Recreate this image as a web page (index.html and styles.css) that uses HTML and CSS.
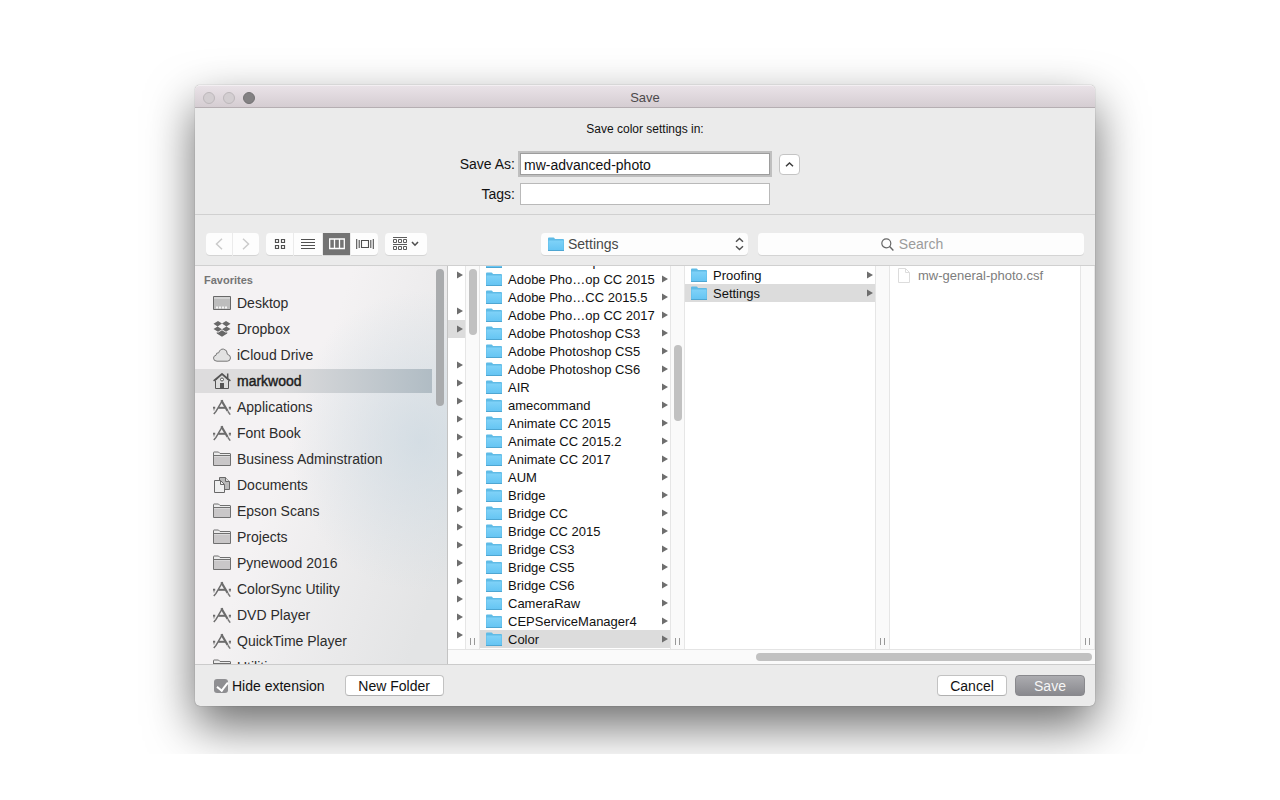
FILE: index.html
```html
<!DOCTYPE html>
<html lang="en">
<head>
  <meta charset="UTF-8" />
  <meta name="viewport" content="width=device-width, initial-scale=1.0"/>
  <title>Save</title>
  <link rel="stylesheet" href="styles.css">
</head>
<body>

  <!-- Icon sprite -->
  <svg class="sprite" aria-hidden="true">
    <linearGradient id="folder-fill" x1="0" y1="0" x2="0" y2="1">
      <stop offset="0" stop-color="#7fd2f8"/>
      <stop offset="1" stop-color="#66c5f3"/>
    </linearGradient>
    <symbol id="folder" viewBox="0 0 16 14">
      <path d="M0 14V1.5Q0 .5 1 .5H5.5Q6.2 .5 6.5 1.2L7 2H15Q16 2 16 3V14Z" fill="#5fbbe6"/>
      <path d="M.5 3.5H15.5V13H.5Z" fill="url(#folder-fill)"/>
      <path d="M0 13.5H16" stroke="#4ea6d2"/>
    </symbol>
    <symbol id="file" viewBox="0 0 16 16">
      <path d="M2.5 1.5H9.5L13.5 5.5V15.5H2.5ZM9.5 1.5V5.5H13.5" fill="#fff" stroke="#dcdcdc"/>
    </symbol>
    <symbol id="arrow" viewBox="0 0 6 8">
      <path d="M0 .5L6 4L0 7.5Z" fill="#6e6e6e"/>
    </symbol>
    <symbol id="desktop" viewBox="0 0 18 16">
      <path d="M.5 1.5H17.5V14.5H.5Z" fill="#bdbdbd" stroke="#686868"/>
      <path d="M1 3H17" stroke="#e9e9e9"/>
      <path d="M3 12.5H15" stroke="#f4f4f4" stroke-width="2" stroke-dasharray="2 1"/>
    </symbol>
    <symbol id="dropbox" viewBox="0 0 18 16">
      <path d="M5 0L9 2.6L4.6 5.4L.5 2.7ZM13 0L17.5 2.7L13.4 5.4L9 2.6ZM.5 8.1L4.6 5.4L9 8.2L5 10.8ZM13.4 5.4L17.5 8.1L13 10.8L9 8.2ZM9 9.2L13 11.8L14.2 11.1V12.5L9 15.8L3.8 12.5V11.1L5 11.8Z" fill="#686868"/>
    </symbol>
    <symbol id="cloud" viewBox="0 0 18 16">
      <path d="M4 14.2Q.5 14.1 .5 11.1Q.6 8.6 3 8.3Q3 5.4 5.7 5.8Q7 1.7 10.5 2.1Q14.4 2.7 14.4 7.3Q17.5 8 17.5 10.9Q17.3 14.2 14.3 14.2Z" fill="#e2e2e2" stroke="#777"/>
    </symbol>
    <symbol id="home" viewBox="0 0 18 16">
      <path d="M2.5 7.5V15.5H15.5V7.5L9 1.5Z" fill="#ddd" stroke="#555"/>
      <path d="M.6 7.8L9 .8L17.4 7.8M14.7 5V.5" fill="none" stroke="#555" stroke-width="1.5"/>
      <path d="M7 10H11V15H7Z" fill="#555"/>
      <circle cx="9" cy="6.5" r="1.5" fill="#fff" stroke="#555"/>
    </symbol>
    <symbol id="apps" viewBox="0 0 18 16">
      <path d="M9.6 1.2L3 12.4L.8 15" fill="none" stroke="#6c6c6c" stroke-width="1.5"/>
      <path d="M8.3 1.2L14.6 12" stroke="#6c6c6c" stroke-width="2.2"/>
      <path d="M14.8 12.2L17.2 15.6" stroke="#777" stroke-width="1.5"/>
      <path d="M5.2 8.8H12.2" stroke="#6c6c6c" stroke-width="2"/>
      <path d="M0 8.8H2.2M15.8 8.8H18" stroke="#6c6c6c" stroke-width="2"/>
      <path d="M1 11.5V9.5M17 11V9.5" stroke="#888"/>
    </symbol>
    <symbol id="side-folder" viewBox="0 0 18 16">
      <path d="M.5 14.5V1.5Q.5 1 1 1H5.5L7 2.5H17Q17.5 2.5 17.5 3V14.5Z" fill="#ececec" stroke="#707070"/>
      <path d="M1 5.5H17V14H1Z" fill="#c9c7c8"/>
      <path d="M1 4.5H17" stroke="#707070"/>
    </symbol>
    <symbol id="documents" viewBox="0 0 18 16">
      <path d="M6.5 .5H12.5L16.5 4.5V12.5H6.5Z" fill="#b9b9b9" stroke="#686868"/>
      <path d="M12.5 .5V4.5H16.5" fill="#ddd" stroke="#686868"/>
      <path d="M1.5 3.5H7.5L11.5 7.5V15.5H1.5Z" fill="#efefef" stroke="#686868"/>
      <path d="M7.5 3.5V7.5H11.5" fill="none" stroke="#686868"/>
    </symbol>
  </svg>

  <main class="stage">
    <section class="window">

      <header class="titlebar">
        <div class="lights">
          <button class="light" aria-label="Close"></button>
          <button class="light" aria-label="Minimize"></button>
          <button class="light light-on" aria-label="Zoom"></button>
        </div>
        <h1>Save</h1>
      </header>

      <!-- File name and tags -->
      <form class="details">
        <p>Save color settings in:</p>
        <label for="save-as">Save As:</label>
        <input type="text" id="save-as" class="focused" value="mw-advanced-photo" />
        <button type="button" class="collapse" aria-label="Collapse">
          <svg width="9" height="5" viewBox="0 0 9 5"><path d="M1 4.2L4.5 1L8 4.2" fill="none" stroke="#3c3c3c" stroke-width="1.5"/></svg>
        </button>
        <label for="tags">Tags:</label>
        <input type="text" id="tags" />
      </form>

      <!-- Toolbar -->
      <div class="toolbar">
        <div class="tools">
          <div class="group">
            <button class="nav" aria-label="Back"><svg width="8" height="12" viewBox="0 0 8 12"><path d="M7 .8L1.5 6L7 11.2" fill="none" stroke="#cbcbcb" stroke-width="1.5"/></svg></button>
            <button class="nav" aria-label="Forward"><svg width="8" height="12" viewBox="0 0 8 12"><path d="M1 .8L6.5 6L1 11.2" fill="none" stroke="#cbcbcb" stroke-width="1.5"/></svg></button>
          </div>
          <div class="group">
            <button class="view" aria-label="Icons"><svg width="12" height="12" viewBox="0 0 12 12"><path d="M1.5 1.5h3v3h-3zM7.5 1.5h3v3h-3zM1.5 7.5h3v3h-3zM7.5 7.5h3v3h-3z" fill="none" stroke="#505050" stroke-width="1.2"/></svg></button>
            <button class="view view-list" aria-label="List"><svg width="14" height="12" viewBox="0 0 14 12"><path d="M0 1.5H14M0 4.5H14M0 7.5H14M0 10.5H14" stroke="#505050"/></svg></button>
            <button class="view active" aria-label="Columns"><svg width="16" height="12" viewBox="0 0 16 12"><path d="M.7 1H15.3V10.5H.7ZM5.5 1V10.5M10.5 1V10.5" fill="none" stroke="#fff" stroke-width="1.3"/></svg></button>
            <button class="view" aria-label="Cover Flow"><svg width="18" height="12" viewBox="0 0 18 12"><path d="M.7 1V11M3.2 2V10M17.3 1V11M14.8 2V10M5.5 2.5H12.5V9.5H5.5Z" fill="none" stroke="#505050" stroke-width="1.1"/></svg></button>
          </div>
          <div class="group">
            <button class="arrange" aria-label="Arrange">
              <svg width="14" height="14" viewBox="0 0 14 14"><path d="M0 .5H14M0 7.5H14M.5 2.5h3v3h-3zM5.5 2.5h3v3h-3zM10.5 2.5h3v3h-3zM.5 9.5h3v3h-3zM5.5 9.5h3v3h-3zM10.5 9.5h3v3h-3z" fill="none" stroke="#5c5c5c"/></svg>
              <svg width="8" height="6" viewBox="0 0 8 6"><path d="M1 1L4 4.2L7 1" fill="none" stroke="#505050" stroke-width="1.6"/></svg>
            </button>
          </div>
        </div>
        <div class="location">
          <svg class="location-folder" width="16" height="14"><use href="#folder"/></svg>
          <select aria-label="Location"><option>Settings</option></select>
          <svg class="location-arrows" width="9" height="14" viewBox="0 0 9 14"><path d="M1 4.7L4.5 1.5L8 4.7M1 9.3L4.5 12.5L8 9.3" fill="none" stroke="#505050" stroke-width="1.5"/></svg>
        </div>
        <div class="search">
          <svg width="13" height="13" viewBox="0 0 13 13"><circle cx="5.3" cy="5.3" r="4.5" fill="none" stroke="#666" stroke-width="1.2"/><path d="M8.6 8.6L12.4 12.4" stroke="#666" stroke-width="1.4"/></svg>
          <input type="text" placeholder="Search" aria-label="Search" />
        </div>
      </div>

      <div class="browser">
        <!-- Sidebar -->
        <aside class="sidebar">
          <nav>
            <h2>Favorites</h2>
            <a href="#"><svg><use href="#desktop"/></svg>Desktop</a>
            <a href="#"><svg><use href="#dropbox"/></svg>Dropbox</a>
            <a href="#"><svg><use href="#cloud"/></svg>iCloud Drive</a>
            <a href="#" class="current"><svg><use href="#home"/></svg>markwood</a>
            <a href="#"><svg><use href="#apps"/></svg>Applications</a>
            <a href="#"><svg><use href="#apps"/></svg>Font Book</a>
            <a href="#"><svg><use href="#side-folder"/></svg>Business Adminstration</a>
            <a href="#"><svg><use href="#documents"/></svg>Documents</a>
            <a href="#"><svg><use href="#side-folder"/></svg>Epson Scans</a>
            <a href="#"><svg><use href="#side-folder"/></svg>Projects</a>
            <a href="#"><svg><use href="#side-folder"/></svg>Pynewood 2016</a>
            <a href="#"><svg><use href="#apps"/></svg>ColorSync Utility</a>
            <a href="#"><svg><use href="#apps"/></svg>DVD Player</a>
            <a href="#"><svg><use href="#apps"/></svg>QuickTime Player</a>
            <a href="#"><svg><use href="#side-folder"/></svg>Utilities</a>
          </nav>
          <span class="thumb thumb-sidebar"></span>
        </aside>

        <div class="columns-area">
          <div class="columns">
            <!-- Parent column, mostly scrolled out of view -->
            <ul class="column column-edge">
              <li><svg class="arrow"><use href="#arrow"/></svg></li>
              <li></li>
              <li><svg class="arrow"><use href="#arrow"/></svg></li>
              <li class="selected"><svg class="arrow"><use href="#arrow"/></svg></li>
              <li></li>
              <li><svg class="arrow"><use href="#arrow"/></svg></li>
              <li><svg class="arrow"><use href="#arrow"/></svg></li>
              <li><svg class="arrow"><use href="#arrow"/></svg></li>
              <li><svg class="arrow"><use href="#arrow"/></svg></li>
              <li><svg class="arrow"><use href="#arrow"/></svg></li>
              <li><svg class="arrow"><use href="#arrow"/></svg></li>
              <li><svg class="arrow"><use href="#arrow"/></svg></li>
              <li><svg class="arrow"><use href="#arrow"/></svg></li>
              <li><svg class="arrow"><use href="#arrow"/></svg></li>
              <li><svg class="arrow"><use href="#arrow"/></svg></li>
              <li><svg class="arrow"><use href="#arrow"/></svg></li>
              <li><svg class="arrow"><use href="#arrow"/></svg></li>
              <li><svg class="arrow"><use href="#arrow"/></svg></li>
              <li><svg class="arrow"><use href="#arrow"/></svg></li>
              <li><svg class="arrow"><use href="#arrow"/></svg></li>
              <li><svg class="arrow"><use href="#arrow"/></svg></li>
            </ul>
            <div class="track"><span class="thumb thumb-parent"></span><i class="grip"></i></div>

            <ul class="column column-end">
              <li><svg class="icon"><use href="#folder"/></svg><a href="#">Adobe Pho…op CC 2014</a><svg class="arrow"><use href="#arrow"/></svg></li>
              <li><svg class="icon"><use href="#folder"/></svg><a href="#">Adobe Pho…op CC 2015</a><svg class="arrow"><use href="#arrow"/></svg></li>
              <li><svg class="icon"><use href="#folder"/></svg><a href="#">Adobe Pho…CC 2015.5</a><svg class="arrow"><use href="#arrow"/></svg></li>
              <li><svg class="icon"><use href="#folder"/></svg><a href="#">Adobe Pho…op CC 2017</a><svg class="arrow"><use href="#arrow"/></svg></li>
              <li><svg class="icon"><use href="#folder"/></svg><a href="#">Adobe Photoshop CS3</a><svg class="arrow"><use href="#arrow"/></svg></li>
              <li><svg class="icon"><use href="#folder"/></svg><a href="#">Adobe Photoshop CS5</a><svg class="arrow"><use href="#arrow"/></svg></li>
              <li><svg class="icon"><use href="#folder"/></svg><a href="#">Adobe Photoshop CS6</a><svg class="arrow"><use href="#arrow"/></svg></li>
              <li><svg class="icon"><use href="#folder"/></svg><a href="#">AIR</a><svg class="arrow"><use href="#arrow"/></svg></li>
              <li><svg class="icon"><use href="#folder"/></svg><a href="#">amecommand</a><svg class="arrow"><use href="#arrow"/></svg></li>
              <li><svg class="icon"><use href="#folder"/></svg><a href="#">Animate CC 2015</a><svg class="arrow"><use href="#arrow"/></svg></li>
              <li><svg class="icon"><use href="#folder"/></svg><a href="#">Animate CC 2015.2</a><svg class="arrow"><use href="#arrow"/></svg></li>
              <li><svg class="icon"><use href="#folder"/></svg><a href="#">Animate CC 2017</a><svg class="arrow"><use href="#arrow"/></svg></li>
              <li><svg class="icon"><use href="#folder"/></svg><a href="#">AUM</a><svg class="arrow"><use href="#arrow"/></svg></li>
              <li><svg class="icon"><use href="#folder"/></svg><a href="#">Bridge</a><svg class="arrow"><use href="#arrow"/></svg></li>
              <li><svg class="icon"><use href="#folder"/></svg><a href="#">Bridge CC</a><svg class="arrow"><use href="#arrow"/></svg></li>
              <li><svg class="icon"><use href="#folder"/></svg><a href="#">Bridge CC 2015</a><svg class="arrow"><use href="#arrow"/></svg></li>
              <li><svg class="icon"><use href="#folder"/></svg><a href="#">Bridge CS3</a><svg class="arrow"><use href="#arrow"/></svg></li>
              <li><svg class="icon"><use href="#folder"/></svg><a href="#">Bridge CS5</a><svg class="arrow"><use href="#arrow"/></svg></li>
              <li><svg class="icon"><use href="#folder"/></svg><a href="#">Bridge CS6</a><svg class="arrow"><use href="#arrow"/></svg></li>
              <li><svg class="icon"><use href="#folder"/></svg><a href="#">CameraRaw</a><svg class="arrow"><use href="#arrow"/></svg></li>
              <li><svg class="icon"><use href="#folder"/></svg><a href="#">CEPServiceManager4</a><svg class="arrow"><use href="#arrow"/></svg></li>
              <li class="selected"><svg class="icon"><use href="#folder"/></svg><a href="#">Color</a><svg class="arrow"><use href="#arrow"/></svg></li>
            </ul>
            <div class="track"><span class="thumb thumb-support"></span><i class="grip"></i></div>

            <ul class="column">
              <li><svg class="icon"><use href="#folder"/></svg><a href="#">Proofing</a><svg class="arrow"><use href="#arrow"/></svg></li>
              <li class="selected"><svg class="icon"><use href="#folder"/></svg><a href="#">Settings</a><svg class="arrow"><use href="#arrow"/></svg></li>
            </ul>
            <div class="track"><i class="grip"></i></div>

            <ul class="column">
              <li class="disabled"><svg class="icon icon-file"><use href="#file"/></svg><span>mw-general-photo.csf</span></li>
            </ul>
            <div class="track"><i class="grip"></i></div>
          </div>
          <div class="hscroll"><span></span></div>
        </div>
      </div>

      <footer class="actions">
        <input type="checkbox" id="hide-extension" checked />
        <label for="hide-extension">Hide extension</label>
        <button class="btn btn-folder">New Folder</button>
        <button class="btn btn-cancel">Cancel</button>
        <button class="btn btn-save">Save</button>
      </footer>
    </section>
  </main>

</body>
</html>
```
FILE: styles.css
```css
/* Reset and base styling */
* {
  margin: 0;
  padding: 0;
  box-sizing: border-box;
}

body {
  background: #fff;
  color: #111;
  font-family: "Liberation Sans", Arial, sans-serif;
  font-size: 14px;
}

button, input, select {
  font: inherit;
  color: inherit;
  border: none;
}

a {
  color: inherit;
  text-decoration: none;
}

svg {
  display: block;
  flex: none;
}

.sprite {
  position: absolute;
  width: 0;
  height: 0;
}

/* Window */
.stage {
  padding: 85px 185px 48px 195px;
  overflow: hidden;
}

.window {
  background: #ebebeb;
  border-radius: 5px;
  box-shadow: 0 0 1px rgba(0,0,0,0.5), 0 20px 48px rgba(0,0,0,0.58);
}

.titlebar {
  display: grid;
  grid-template-columns: 1fr auto 1fr;
  align-items: center;
  height: 23px;
  padding: 2px 8px 0;
  border-radius: 5px 5px 0 0;
  border-top: 1px solid #f3eff2;
  border-bottom: 1px solid #b5aeb2;
  background: linear-gradient(#e9e2e7, #d5cdd2);
}

.titlebar h1 {
  font-size: 13px;
  font-weight: normal;
  color: #4c494b;
}

.lights {
  display: flex;
  gap: 8px;
}

.light {
  width: 12px;
  height: 12px;
  border-radius: 50%;
  border: 1px solid #bdb8bb;
  background: #d3ced1;
}

.light-on {
  border-color: #747274;
  background: #838183;
}

/* Name form */
.details {
  display: grid;
  grid-template-columns: 1fr 250px 1fr;
  grid-template-rows: 31px 22px 22px;
  gap: 8px 5px;
  align-items: center;
  padding: 6px 0 9px;
  border-bottom: 1px solid #d0d0d0;
}

.details p {
  grid-column: 1 / -1;
  padding-bottom: 2px;
  text-align: center;
  font-size: 12px;
}

.details label {
  grid-column: 1;
  justify-self: end;
}

.details input {
  height: 22px;
  padding: 2px 3px 0;
  border: 1px solid #b9b9b9;
  background: #fff;
  outline: none;
}

.details .focused {
  border-color: #9d9d9d;
  box-shadow: 0 0 0 2px #bfbfbf;
}

.collapse {
  display: flex;
  align-items: center;
  justify-content: center;
  width: 21px;
  height: 21px;
  margin-left: 4px;
  border: 1px solid #c4c4c4;
  border-radius: 4px;
  background: #fff;
}

/* Toolbar */
.toolbar {
  display: flex;
  padding: 18px 11px 10px;
  border-bottom: 1px solid #d0d0d0;
}

.tools {
  display: flex;
  gap: 7px;
  flex: 0 0 335px;
}

.group {
  display: flex;
  gap: 1px;
}

.group button {
  display: flex;
  align-items: center;
  justify-content: center;
  gap: 4px;
  height: 22px;
  background: #fdfdfd;
  box-shadow: 0 1px 0 #d4d4d4;
}

.group button:first-child {
  border-top-left-radius: 4px;
  border-bottom-left-radius: 4px;
}

.group button:last-child {
  border-top-right-radius: 4px;
  border-bottom-right-radius: 4px;
}

.group .nav {
  width: 26px;
}

.group .view {
  width: 27px;
}

.group .view-list {
  width: 28px;
}

.group .active {
  background: #737373;
}

.group .arrange {
  width: 42px;
}

.location {
  position: relative;
  flex: 0 0 207px;
  margin-right: 10px;
}

.location select {
  width: 100%;
  height: 22px;
  padding: 0 27px;
  appearance: none;
  border-radius: 4px;
  background: #fdfdfd;
  box-shadow: 0 1px 0 #d4d4d4;
  color: #484848;
}

.location-folder {
  position: absolute;
  top: 4px;
  left: 7px;
}

.location-arrows {
  position: absolute;
  top: 4px;
  right: 4px;
}

.search {
  position: relative;
  flex: 1;
}

.search svg {
  position: absolute;
  top: 5px;
  left: calc(50% - 40px);
}

.search input {
  width: 100%;
  height: 22px;
  border-radius: 4px;
  background: #fdfdfd;
  box-shadow: 0 1px 0 #d4d4d4;
  text-align: center;
}

.search input::placeholder {
  color: #9b9b9b;
}

/* Browser */
.browser {
  display: flex;
  height: 399px;
  border-bottom: 1px solid #cbcbcb;
}

.sidebar {
  display: flex;
  flex: 0 0 253px;
  overflow: hidden;
  border-right: 1px solid #c3c3c3;
  color: #2c2c2c;
  background:
    radial-gradient(130px 150px at 225px 175px, rgba(203,216,225,0.7), rgba(203,216,225,0)),
    linear-gradient(110deg, #f4f2f3 40%, #e3e4e5 90%);
}

.sidebar nav {
  flex: 1;
}

.sidebar h2 {
  padding: 7px 9px 4px;
  font-size: 11px;
  line-height: 14px;
  color: #757575;
}

.sidebar a {
  display: flex;
  align-items: center;
  gap: 6px;
  height: 24px;
  margin-bottom: 2px;
  padding-left: 18px;
}

.sidebar svg {
  width: 18px;
  height: 16px;
}

.sidebar .current {
  color: #1c1c1c;
  -webkit-text-stroke: 0.4px #1c1c1c;
  background: linear-gradient(90deg, #dddcdd 35%, #b0bcc4);
}

.thumb {
  flex: none;
  width: 8px;
  border-radius: 4px;
  background: #c1c1c1;
}

.thumb-sidebar {
  height: 137px;
  margin: 3px 3px 0 4px;
  background: #a9abad;
}

.columns-area {
  display: flex;
  flex-direction: column;
  flex: 1;
  min-width: 0;
  background: #fff;
}

.columns {
  display: flex;
  flex: 1;
  min-height: 0;
}

.column {
  display: flex;
  flex-direction: column;
  flex: 1;
  min-width: 0;
  overflow: hidden;
  list-style: none;
  font-size: 13px;
}

.column-edge {
  flex: 0 0 17px;
}

/* Scrolled to its last row */
.column-end {
  justify-content: flex-end;
  padding-bottom: 1px;
}

.column li {
  display: flex;
  flex: none;
  align-items: center;
  gap: 6px;
  height: 18px;
  padding: 0 2px 0 6px;
}

.column .selected {
  background: #dcdcdc;
}

.column .disabled {
  color: #7d7d7d;
}

.column .icon {
  width: 16px;
  height: 14px;
}

.column .icon-file {
  height: 16px;
}

.column .arrow {
  width: 6px;
  height: 8px;
  margin-left: auto;
}

.track {
  display: flex;
  flex: 0 0 15px;
  flex-direction: column;
  align-items: center;
  border-left: 1px solid #e6e6e6;
  border-right: 1px solid #e6e6e6;
  background: #fafafa;
}

.thumb-parent {
  height: 66px;
  margin-top: 3px;
}

.thumb-support {
  height: 76px;
  margin-top: 79px;
}

.grip {
  width: 5px;
  height: 7px;
  margin: auto 0 4px;
  border-left: 1px solid #999;
  border-right: 1px solid #999;
}

.hscroll {
  display: flex;
  justify-content: flex-end;
  height: 15px;
  padding: 3px;
  border-top: 1px solid #e4e4e4;
  background: #fafafa;
}

.hscroll span {
  width: 336px;
  height: 8px;
  border-radius: 4px;
  background: #c1c1c1;
}

/* Footer */
.actions {
  display: flex;
  align-items: center;
  height: 41px;
  padding: 0 10px 0 19px;
}

.actions input {
  width: 14px;
  height: 14px;
  margin-right: 4px;
  appearance: none;
  border-radius: 3px;
  background: #8f8f92;
}

.actions input:checked::before {
  content: "";
  display: block;
  width: 5px;
  height: 9px;
  margin: 1px 0 0 5px;
  border-right: 2px solid #fff;
  border-bottom: 2px solid #fff;
  transform: rotate(38deg);
}

.btn {
  height: 21px;
  border: 1px solid #c2c2c2;
  border-bottom-color: #b0b0b0;
  border-radius: 4px;
  background: #fff;
}

.btn-folder {
  width: 99px;
  margin-left: 20px;
}

.btn-cancel {
  width: 70px;
  margin-left: auto;
}

.btn-save {
  width: 70px;
  margin-left: 8px;
  border-color: #89898d;
  background: linear-gradient(#acacb0, #89898e);
  color: #f6f6f6;
}
```
